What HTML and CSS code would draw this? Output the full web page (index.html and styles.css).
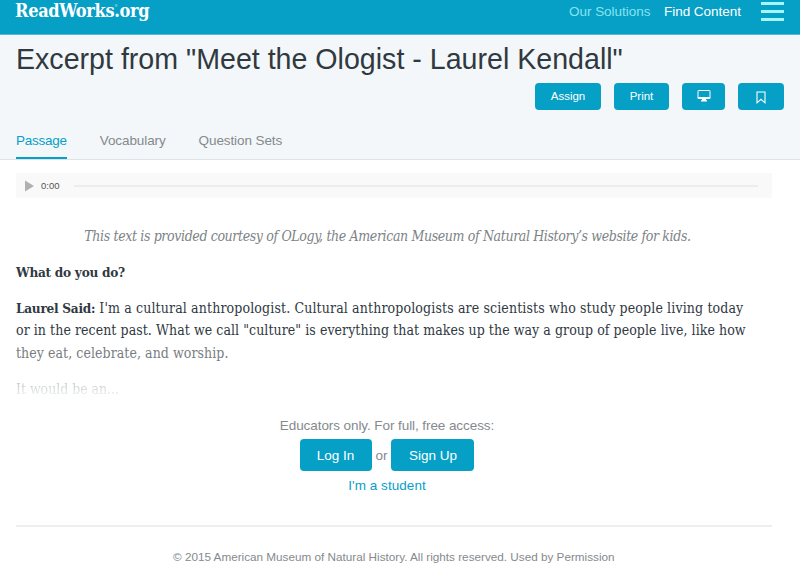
FILE: index.html
```html
<!DOCTYPE html>
<html lang="en">
<head>
    <meta charset="UTF-8">
    <meta name="viewport" content="width=device-width, initial-scale=1.0">
    <title>Excerpt from "Meet the Ologist - Laurel Kendall" | ReadWorks</title>
    <link rel="stylesheet" href="styles.css">
</head>
<body>

    <header class="navbar">
        <a class="logo" href="#">ReadWorks<span class="reg">®</span>.org</a>
        <nav class="nav-links">
            <a class="solutions" href="#">Our Solutions</a>
            <a class="find" href="#">Find Content</a>
            <button class="menu" type="button" aria-label="Menu"><span></span><span></span><span></span></button>
        </nav>
    </header>

    <section class="page-header">
        <h1>Excerpt from "Meet the Ologist - Laurel Kendall"</h1>
        <div class="actions">
            <button class="btn assign" type="button">Assign</button>
            <button class="btn print" type="button">Print</button>
            <button class="btn present" type="button" aria-label="Present">
                <svg width="14" height="12" viewBox="0 0 14 12">
                    <path d="M1.500 .5h11q.5 0 .5.500V8.500H1V1q0-.5.500-.5z" fill="none" stroke="#fff"/>
                    <path d="M1 7h12v2H1zM5 9h4v1.300h1v1.200H4v-1.200h1z" fill="#fff"/>
                </svg>
            </button>
            <button class="btn bookmark" type="button" aria-label="Bookmark">
                <svg width="10" height="13" viewBox="0 0 10 13">
                    <path d="M1 1h8v10.800L5 8.300l-4 3.500z" fill="none" stroke="#fff" stroke-width="1.100"/>
                </svg>
            </button>
        </div>
        <nav class="tabs">
            <a class="tab active" href="#">Passage</a>
            <a class="tab" href="#">Vocabulary</a>
            <a class="tab" href="#">Question Sets</a>
        </nav>
    </section>

    <main class="content">
        <div class="player">
            <svg class="play" width="9" height="12" viewBox="0 0 9 12"><path d="M0 .5l9 5.500-9 5.500z" fill="#b0b0b0"/></svg>
            <span class="time">0:00</span>
            <div class="track"></div>
        </div>

        <article class="passage">
            <p class="courtesy">This text is provided courtesy of OLogy, the American Museum of Natural History’s website for kids.</p>
            <p class="question"><strong>What do you do?</strong></p>
            <p class="answer"><span class="lead"><strong>Laurel Said:</strong> I'm a cultural anthropologist. Cultural anthropologists are scientists who study people living today</span><br>
                or in the recent past. What we call "culture" is everything that makes up the way a group of people live, like how<br>
                <span class="faded">they eat, celebrate, and worship.</span></p>
            <p class="more">It would be an...</p>
        </article>

        <div class="access">
            <p>Educators only. For full, free access:</p>
            <div class="access-buttons">
                <button class="btn login" type="button">Log In</button>
                <span>or</span>
                <button class="btn signup" type="button">Sign Up</button>
            </div>
            <a class="student" href="#">I'm a student</a>
        </div>

        <footer class="copyright">© 2015 American Museum of Natural History. All rights reserved. Used by Permission</footer>
    </main>

</body>
</html>
```
FILE: styles.css
```css
* {
    box-sizing: border-box;
}

body {
    margin: 0;
    height: 588px;
    overflow: hidden;
    background: #fff;
    font-family: "Liberation Sans", Arial, sans-serif;
    font-size: 13.5px;
    color: #848a8d;
}

a {
    text-decoration: none;
    color: #069fc6;
}

p, h1 {
    margin: 0;
    white-space: nowrap;
}

button {
    font-family: inherit;
    border: none;
    padding: 0;
}

.navbar {
    display: flex;
    justify-content: space-between;
    height: 35px;
    padding: 0 16px 0 15px;
    background: #069fc6;
    border-bottom: 1px solid #58b9d3;
}

.logo {
    color: #fff;
    font-family: "DejaVu Serif Condensed", "DejaVu Serif", serif;
    font-stretch: condensed;
    font-weight: bold;
    font-size: 18px;
    line-height: 21px;
    letter-spacing: -0.3px;
}

.reg {
    display: inline-block;
    width: 4px;
    margin-right: -4px;
    font-size: 4px;
    line-height: 4px;
    letter-spacing: 0;
    vertical-align: 10px;
    color: #9bdcec;
}

.nav-links {
    display: flex;
    line-height: 23px;
    letter-spacing: -0.03px;
}

.solutions {
    color: #86e4ef;
    width: 95px;
}

.find {
    color: #fff;
    width: 97px;
}

.menu {
    width: 23px;
    height: 19px;
    margin-top: 2px;
    background: none;
    display: flex;
    flex-direction: column;
    justify-content: space-between;
}

.menu span {
    width: 23px;
    height: 3px;
    background: #a5f6fa;
}

.page-header {
    height: 125px;
    padding: 8px 16px 0;
    background: #f3f7f9;
    border-bottom: 1px solid #dce4e7;
}

h1 {
    font-size: 28.6px;
    font-weight: normal;
    line-height: 33px;
    color: #30393f;
}

.actions {
    display: flex;
    justify-content: flex-end;
    margin-top: 7px;
}

.btn {
    display: flex;
    align-items: center;
    justify-content: center;
    height: 27px;
    border-radius: 4px;
    background: #069fc6;
    color: #fff;
    font-size: 11.5px;
}

.assign, .print {
    padding-bottom: 1px;
}

.assign {
    width: 66px;
}

.print {
    width: 55px;
    margin-left: 13px;
}

.present {
    width: 43px;
    margin-left: 13px;
}

.present svg {
    margin-top: -2px;
}

.bookmark {
    width: 46px;
    margin-left: 13px;
}

.bookmark svg {
    margin-top: 2px;
}

.tabs {
    display: flex;
    gap: 33px;
    margin-top: 20px;
    letter-spacing: -0.1px;
}

.tab {
    height: 29px;
    line-height: 21px;
    color: #848a8d;
}

.tab.active {
    color: #069fc6;
    border-bottom: 2px solid #069fc6;
    letter-spacing: -0.25px;
}

.content {
    width: 756px;
    margin: 13px 0 0 16px;
}

.player {
    display: flex;
    align-items: center;
    height: 25px;
    padding: 0 14px 0 9px;
    background: #f9f9f9;
}

.time {
    width: 33px;
    margin-left: 7px;
    font-size: 9.5px;
    color: #555;
}

.track {
    flex: 1;
    height: 2px;
    background: #ececec;
}

.passage {
    height: 206px;
    padding-top: 27px;
    font-family: "DejaVu Serif Condensed", "DejaVu Serif", serif;
    font-stretch: condensed;
    font-size: 14px;
    line-height: 22.5px;
    letter-spacing: 0.06px;
    color: #30393f;
}

.passage strong {
    font-size: 13.5px;
    letter-spacing: -0.27px;
}

.courtesy {
    margin: 0 13px 13px 0;
    text-align: center;
    font-style: italic;
    letter-spacing: -0.37px;
    color: #7c8386;
}

.question {
    margin-bottom: 13.5px;
}

.lead {
    letter-spacing: 0.13px;
}

.faded {
    color: #777d81;
}

.more {
    margin-top: 13.5px;
    letter-spacing: -0.05px;
    background: linear-gradient(#c3c7c9 20%, #f2f3f3 85%);
    background-clip: text;
    color: transparent;
}

.access {
    display: flex;
    flex-direction: column;
    align-items: center;
    padding: 0 14px 29px 0;
    margin-top: 12px;
    border-bottom: 2px solid #eceeef;
    letter-spacing: -0.08px;
}

.access p {
    line-height: 20px;
}

.access-buttons {
    display: flex;
    align-items: center;
    gap: 4px;
    margin-top: 3px;
}

.access-buttons .btn {
    height: 32px;
    font-size: 13.5px;
}

.access-buttons .login {
    width: 72px;
}

.access-buttons .signup {
    width: 83px;
}

.student {
    margin-top: 5px;
    line-height: 20px;
    letter-spacing: 0.05px;
}

.copyright {
    padding: 21px 0 0 157px;
    font-size: 11.72px;
    line-height: 18px;
    white-space: nowrap;
}
```
